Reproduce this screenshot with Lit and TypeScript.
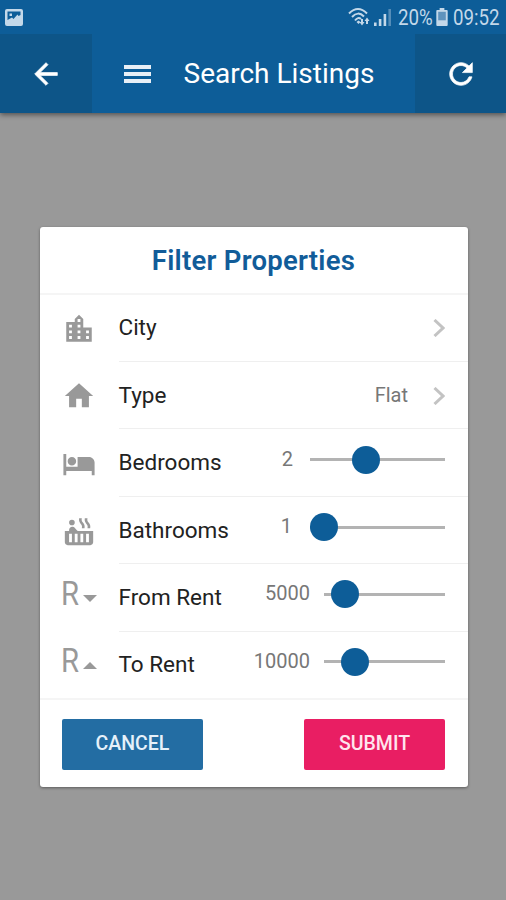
import { LitElement, html, css } from "lit";
import { customElement } from "lit/decorators.js";
import { styleMap } from "lit/directives/style-map.js";

const CITY = "M15 11V5l-3-3-3 3v2H3v14h18V11h-6zm-8 8H5v-2h2v2zm0-4H5v-2h2v2zm0-4H5V9h2v2zm6 8h-2v-2h2v2zm0-4h-2v-2h2v2zm0-4h-2V9h2v2zm0-4h-2V5h2v2zm6 12h-2v-2h2v2zm0-4h-2v-2h2v2z";
const HOME = "M10 20v-6h4v6h5v-8h3L12 3 2 12h3v8z";
const BED = "M7 13c1.66 0 3-1.34 3-3S8.66 7 7 7s-3 1.34-3 3 1.34 3 3 3zm12-6h-8v7H3V5H1v15h2v-3h18v3h2v-9c0-2.21-1.79-4-4-4z";
const TUB = "M9 6a2 2 0 1 1-4 0 2 2 0 0 1 4 0zM11.15 12c-.31-.22-.59-.46-.82-.72l-1.4-1.55c-.19-.21-.43-.38-.69-.5-.29-.14-.62-.23-.96-.23h-.03C6.01 9 5 10.01 5 11.25V12H2v8c0 1.1.9 2 2 2h16c1.1 0 2-.9 2-2v-8H11.15zM7 20H5v-6h2v6zm4 0H9v-6h2v6zm4 0h-2v-6h2v6zm4 0h-2v-6h2v6zm-.35-14.14l-.07-.07c-.57-.62-.82-1.41-.67-2.2L18 3h-1.89l-.06.43c-.2 1.36.27 2.71 1.3 3.72l.07.06c.57.62.82 1.41.67 2.2l-.11.59h1.91l.06-.43c.21-1.36-.27-2.71-1.3-3.71zm-4 0l-.07-.07c-.57-.62-.82-1.41-.67-2.2L14 3h-1.89l-.06.43c-.2 1.36.27 2.71 1.3 3.72l.07.06c.57.62.82 1.41.67 2.2l-.11.59h1.91l.06-.43c.21-1.36-.27-2.71-1.3-3.71z";

const icon = (d: string) => html`<svg class="icon" viewBox="0 0 24 24"><path d=${d} /></svg>`;

const rand = (points: string) => html`<span class="rand">R</span
  ><svg class="caret" viewBox="0 0 14 7"><polygon points=${points} /></svg>`;

interface Slider {
  value: string;
  width: number;
  knob: number;
  gap: number;
}

@customElement("app-root")
export class AppRoot extends LitElement {
  static styles = css`
    :host {
      display: flex;
      flex-direction: column;
      height: 900px;
      background: #999;
      font-family: Roboto, "Liberation Sans", sans-serif;
      overflow: hidden;
    }
    header {
      background: #0d5d98;
      box-shadow: 0 2px 5px rgba(0, 0, 0, 0.45);
    }
    .status {
      height: 34px;
      box-sizing: border-box;
      padding: 0 5px 0 5px;
      display: flex;
      align-items: center;
      color: #c3d8e9;
      fill: currentColor;
    }
    .status .photo { width: 18px; height: 17px; margin-right: auto; }
    .status .wifi { width: 23px; height: 20px; margin-right: 3px; }
    .status .signal { width: 17px; height: 17px; margin: 1px 7px 0 0; }
    .status .battery { width: 12px; height: 18px; margin: 0 5px 0 4px; }
    .condensed { font-size: 21.5px; line-height: 36px; height: 34px; }
    .condensed span {
      display: inline-block;
      transform: scaleX(0.87);
      transform-origin: 0 50%;
    }
    .pct { width: 34px; }
    .time { width: 48px; }
    .bar { display: flex; height: 79px; align-items: stretch; color: #fff; }
    .tile {
      width: 92px;
      background: #0d5588;
      display: flex;
      align-items: center;
      justify-content: center;
      fill: #fff;
      stroke: #fff;
      stroke-width: 0.5;
    }
    .tile svg { width: 34px; height: 34px; }
    .tile.end { width: 91px; }
    .heading { flex: 1; display: flex; align-items: center; padding-left: 32px; }
    .burger { width: 27px; height: 20px; fill: #e8eff6; margin-right: 32.5px; }
    h1 { margin: 0; font-size: 28px; font-weight: 400; line-height: 80px; white-space: nowrap; }
    .card {
      width: 428px;
      height: 560px;
      margin: 114px 0 0 39.5px;
      box-sizing: border-box;
      background: #fff;
      border-radius: 3px;
      box-shadow: 0 1px 3px rgba(0, 0, 0, 0.4);
      display: flex;
      flex-direction: column;
    }
    h2 {
      margin: 0;
      height: 67.5px;
      box-sizing: border-box;
      border-bottom: 2px solid #f5f5f5;
      text-align: center;
      font-size: 27.5px;
      line-height: 68px;
      letter-spacing: 0.25px;
      font-weight: 600;
      color: #115c99;
    }
    .row { height: 67.45px; display: flex; }
    .slot {
      width: 79px;
      display: flex;
      align-items: center;
      justify-content: center;
      fill: #999;
      color: #999;
      padding-top: 1px;
      box-sizing: border-box;
    }
    .icon { width: 34px; height: 34px; }
    .rand {
      font-size: 32.5px;
      font-weight: 400;
      line-height: 36px;
      margin: -9px 2px 0 -1px;
      transform: scaleX(0.9);
    }
    .caret { width: 14px; height: 7px; }
    .body {
      flex: 1;
      display: flex;
      align-items: center;
      border-bottom: 1.5px solid #efefef;
      box-sizing: border-box;
      padding-right: 22.5px;
    }
    .row:last-of-type .body { border-bottom-color: transparent; }
    .label { font-size: 22.5px; color: #222; margin-right: auto; line-height: 30px; margin-top: -1px; }
    .value { font-size: 20px; color: #777; line-height: 26px; }
    .chevron { width: 12px; height: 18px; fill: none; stroke: #c3c3c3; stroke-width: 3; margin-left: 25px; padding-top: 1px; }
    .control { display: flex; align-items: center; margin-top: -8px; }
    .track { height: 3px; background: #b3b3b3; position: relative; margin-top: 2px; }
    .knob {
      position: absolute;
      top: -12.5px;
      width: 28px;
      height: 28px;
      border-radius: 50%;
      background: #0d5d98;
    }
    footer {
      flex: 1;
      border-top: 2px solid #f5f5f5;
      margin-top: -1.5px;
      display: flex;
      justify-content: space-between;
      align-items: flex-start;
      padding: 19px 22.5px 0;
    }
    button {
      width: 141px;
      height: 51px;
      border: 0;
      padding: 0;
      border-radius: 2px;
      font: 500 19.5px/48px Roboto, "Liberation Sans", sans-serif;
      color: #e6f1fa;
      background: #236da3;
    }
    button.submit { background: #e91e63; color: #ffe5ee; }
  `;

  private row(lead: unknown, label: string, trail: unknown) {
    return html`<div class="row">
      <div class="slot">${lead}</div>
      <div class="body"><span class="label">${label}</span>${trail}</div>
    </div>`;
  }

  private link(value: string) {
    return html`<span class="value">${value}</span>
      <svg class="chevron" viewBox="0 0 12 18"><path d="M1.5 1l8.5 8-8.5 8" /></svg>`;
  }

  private slider(s: Slider) {
    return html`<div class="control">
      <span class="value">${s.value}</span>
      <div class="track" style=${styleMap({ width: `${s.width}px`, marginLeft: `${s.gap}px` })}>
        <div class="knob" style=${styleMap({ left: `${s.knob - 14}px` })}></div>
      </div>
    </div>`;
  }

  render() {
    return html`
      <header>
        <div class="status">
          <svg class="photo" viewBox="0 0 18 17">
            <path fill-rule="evenodd" d="M2 0h14a2 2 0 0 1 2 2v13a2 2 0 0 1-2 2H2a2 2 0 0 1-2-2V2a2 2 0 0 1 2-2zM2.500 2.500v8.500l4.500-2.500 1.500 1.500 4-4.500 1 1.500 2-1v-3.500zM4.500 4.500h2.500v2.500H4.500z" />
          </svg>
          <svg class="wifi" viewBox="0 0 23 20">
            <g fill="none" stroke="currentColor" stroke-width="2">
              <path d="M1 6.500Q10 -2.500 19 6.500M4 10Q10 3.500 16 9.500M7 13.500Q10 9.500 13 12" />
            </g>
            <path d="M8.500 15l2-1.500 2 1.500-2 2zM13 12h2v3h1.500l-2.500 3.500-2.500-3.500H13zM18 17v-3h-1.500l2.500-3.500 2.500 3.500H20v3z" />
          </svg>
          <svg class="signal" viewBox="0 0 17 17">
            <path d="M0 13.500h2.600V17H0zM4.800 10h2.600v7H4.800zM9.600 5h2.600v12H9.600z" />
            <path opacity=".4" d="M14.400 0H17v17h-2.600z" />
          </svg>
          <div class="condensed pct"><span>20%</span></div>
          <svg class="battery" viewBox="0 0 12 19">
            <path d="M3.500 0h5v2H11a1 1 0 0 1 1 1v15a1 1 0 0 1-1 1H1a1 1 0 0 1-1-1V3a1 1 0 0 1 1-1h2.500z" />
            <path fill="#5f93bd" d="M2 4h8v9H2z" />
          </svg>
          <div class="condensed time"><span>09:52</span></div>
        </div>
        <div class="bar">
          <div class="tile">
            <svg viewBox="0 0 24 24"><path d="M20 11H7.830l5.590-5.590L12 4l-8 8 8 8 1.410-1.410L7.830 13H20v-2z" /></svg>
          </div>
          <div class="heading">
            <svg class="burger" viewBox="0 0 27 20">
              <rect width="27" height="4" y="1" /><rect width="27" height="4" y="8" /><rect width="27" height="4" y="15" />
            </svg>
            <h1>Search Listings</h1>
          </div>
          <div class="tile end">
            <svg viewBox="0 0 24 24"><path d="M17.650 6.350C16.200 4.900 14.210 4 12 4c-4.420 0-7.990 3.580-7.990 8s3.570 8 7.990 8c3.730 0 6.840-2.550 7.730-6h-2.080c-.820 2.330-3.040 4-5.650 4-3.310 0-6-2.690-6-6s2.690-6 6-6c1.660 0 3.140.690 4.220 1.780L13 11h7V4l-2.350 2.350z" /></svg>
          </div>
        </div>
      </header>
      <section class="card">
        <h2>Filter Properties</h2>
        ${this.row(icon(CITY), "City", this.link(""))}
        ${this.row(icon(HOME), "Type", this.link("Flat"))}
        ${this.row(icon(BED), "Bedrooms", this.slider({ value: "2", width: 135, knob: 56, gap: 17 }))}
        ${this.row(icon(TUB), "Bathrooms", this.slider({ value: "1", width: 135, knob: 14, gap: 18 }))}
        ${this.row(rand("0,0 14,0 7,7"), "From Rent", this.slider({ value: "5000", width: 121, knob: 21, gap: 14 }))}
        ${this.row(rand("0,7 14,7 7,0"), "To Rent", this.slider({ value: "10000", width: 121, knob: 31, gap: 14 }))}
        <footer>
          <button>CANCEL</button>
          <button class="submit">SUBMIT</button>
        </footer>
      </section>
    `;
  }
}
